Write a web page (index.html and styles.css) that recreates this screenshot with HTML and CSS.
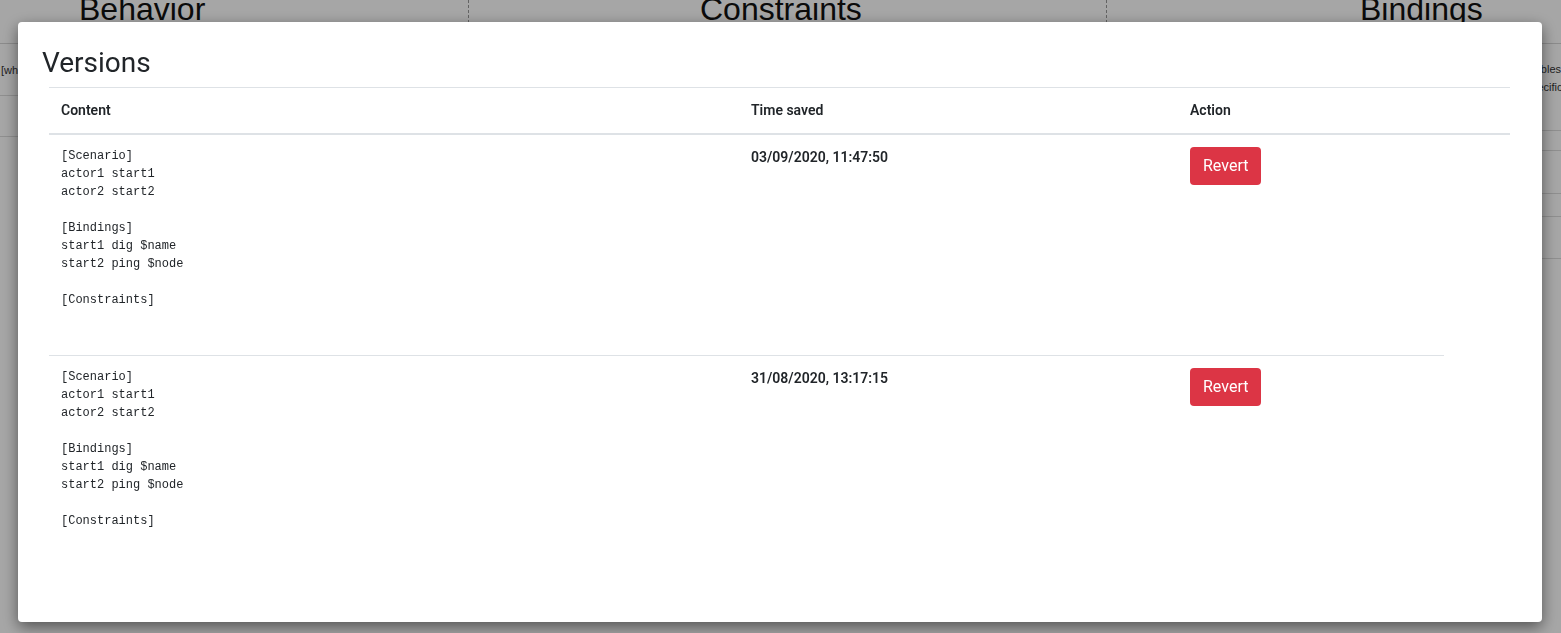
FILE: index.html
```html
<!DOCTYPE html>
<html lang="en">
<head>
<meta charset="utf-8">
<title>Versions</title>
<link rel="stylesheet" href="styles.css">
</head>
<body>
<div class="page">
  <div class="page-heads">
    <div class="head-col head-col-1"><h2 class="page-title">Behavior</h2></div>
    <div class="head-col head-col-2"><h2 class="page-title">Constraints</h2></div>
    <div class="head-col head-col-3"><h2 class="page-title">Bindings</h2></div>
  </div>
  <div class="panes">
    <div class="pane pane-left">
      <div class="pane-row pane-row-note"><span class="note-text">[when the actor starts, run the following]</span></div>
      <div class="pane-row pane-row-b"></div>
    </div>
    <div class="pane pane-mid"></div>
    <div class="pane pane-right">
      <div class="pane-row r1">
        <div class="note-line">Variables</div>
        <div class="note-line">A specific</div>
      </div>
      <div class="pane-row r2"></div>
      <div class="pane-row r3"></div>
      <div class="pane-row r4"></div>
      <div class="pane-row r5"></div>
    </div>
  </div>
</div>

<div class="modal-layer">
  <div class="modal">
    <h3 class="modal-title">Versions</h3>
    <div class="table-wrap">
      <table class="versions">
        <colgroup>
          <col class="c-content">
          <col class="c-time">
          <col class="c-action">
        </colgroup>
        <thead>
          <tr>
            <th>Content</th>
            <th>Time saved</th>
            <th>Action</th>
          </tr>
        </thead>
        <tbody>
          <tr class="first-row">
            <td><pre class="code">[Scenario]
actor1 start1
actor2 start2

[Bindings]
start1 dig $name
start2 ping $node

[Constraints]

</pre></td>
            <td class="time">03/09/2020, 11:47:50</td>
            <td class="action"><button class="btn-revert">Revert</button></td>
          </tr>
          <tr class="next-row">
            <td><pre class="code">[Scenario]
actor1 start1
actor2 start2

[Bindings]
start1 dig $name
start2 ping $node

[Constraints]

</pre></td>
            <td class="time">31/08/2020, 13:17:15</td>
            <td class="action"><button class="btn-revert">Revert</button></td>
          </tr>
        </tbody>
      </table>
    </div>
  </div>
</div>
</body>
</html>
```

FILE: styles.css
```css
html, body {
  margin: 0;
  padding: 0;
}

body {
  background: #ffffff;
  font-family: "Liberation Sans", Arial, sans-serif;
  color: #111;
  overflow: hidden;
  width: 1561px;
  height: 633px;
}

/* ---------- page behind the modal ---------- */
.page {
  width: 1561px;
}

.page-heads {
  display: flex;
  height: 43px;
  border-bottom: 1px solid #d6d6d6;
  overflow: hidden;
}

.head-col {
  box-sizing: border-box;
  height: 43px;
}

.head-col-1 {
  width: 468px;
  padding-left: 79px;
}

.head-col-2 {
  width: 638px;
  border-left: 1px dashed #999;
  padding-left: 231px;
}

.head-col-3 {
  flex: 1;
  border-left: 1px dashed #999;
  padding-left: 253px;
}

.page-title {
  margin: -7px 0 0;
  font-family: "Liberation Sans", Arial, sans-serif;
  font-size: 32px;
  line-height: 32px;
  font-weight: 400;
  color: #111;
  white-space: nowrap;
}

.panes {
  display: flex;
}

.pane-left {
  width: 468px;
}

.pane-mid {
  width: 638px;
}

.pane-right {
  flex: 1;
  padding-left: 410px;
  box-sizing: border-box;
  overflow: hidden;
}

.pane-row {
  border-bottom: 1px solid #dcdcdc;
  box-sizing: content-box;
}

.pane-right .pane-row {
  margin-left: -410px;
  padding-left: 410px;
}

.pane-row-note {
  height: 51px;
  display: flex;
  align-items: center;
  padding-left: 1px;
}

.note-text {
  font-size: 11px;
  color: #333;
  white-space: nowrap;
}

.pane-row-b {
  height: 40px;
}

.r1 {
  height: 70px;
  padding-top: 16px;
}

.note-line {
  font-size: 11px;
  line-height: 18px;
  color: #333;
  white-space: nowrap;
}

.r2 { height: 19px; }
.r3 { height: 42px; }
.r4 { height: 22px; }
.r5 { height: 41px; }

/* ---------- modal ---------- */
.modal-layer {
  position: fixed;
  inset: 0;
  background: rgba(0, 0, 0, 0.35);
  padding: 22px 19px 0 18px;
}

.modal {
  box-sizing: border-box;
  width: 1524px;
  height: 600px;
  background: #fff;
  border-radius: 4px;
  box-shadow: 0 5px 15px rgba(0, 0, 0, 0.5);
  padding: 24px;
  font-family: Roboto, "Liberation Sans", Arial, sans-serif;
  color: #212529;
}

.modal-title {
  margin: 0 0 7px;
  font-size: 28px;
  line-height: 1.2;
  font-weight: 400;
  color: #212529;
}

.table-wrap {
  padding: 0 8px 0 7px;
}

.versions {
  width: 1461px;
  table-layout: fixed;
  border-collapse: separate;
  border-spacing: 0;
  font-size: 14px;
  line-height: 21px;
}

.c-content { width: 690px; }
.c-time { width: 439px; }
.c-action { width: 332px; }

.versions th {
  text-align: left;
  font-weight: 600;
  padding: 12px;
  border-top: 1px solid #dee2e6;
  border-bottom: 2px solid #dee2e6;
  vertical-align: bottom;
}

.versions td {
  padding: 12px;
  vertical-align: top;
}

.next-row td {
  border-top: 1px solid #dee2e6;
}

.next-row td.action {
  border-top: 1px solid transparent;
  background-image: linear-gradient(#dee2e6, #dee2e6);
  background-repeat: no-repeat;
  background-origin: border-box;
  background-position: 0 0;
  background-size: 266px 1px;
}

.code {
  margin: 0 0 16px;
  font-family: "Liberation Mono", "Courier New", monospace;
  font-size: 12px;
  line-height: 18px;
  color: #212529;
}

.time {
  font-weight: 600;
}

.btn-revert {
  display: inline-block;
  border: 0;
  border-radius: 4px;
  background: #dc3545;
  color: #fff;
  font-family: Roboto, "Liberation Sans", Arial, sans-serif;
  font-size: 16px;
  line-height: 24px;
  padding: 7px 13px;
  cursor: pointer;
}
```
